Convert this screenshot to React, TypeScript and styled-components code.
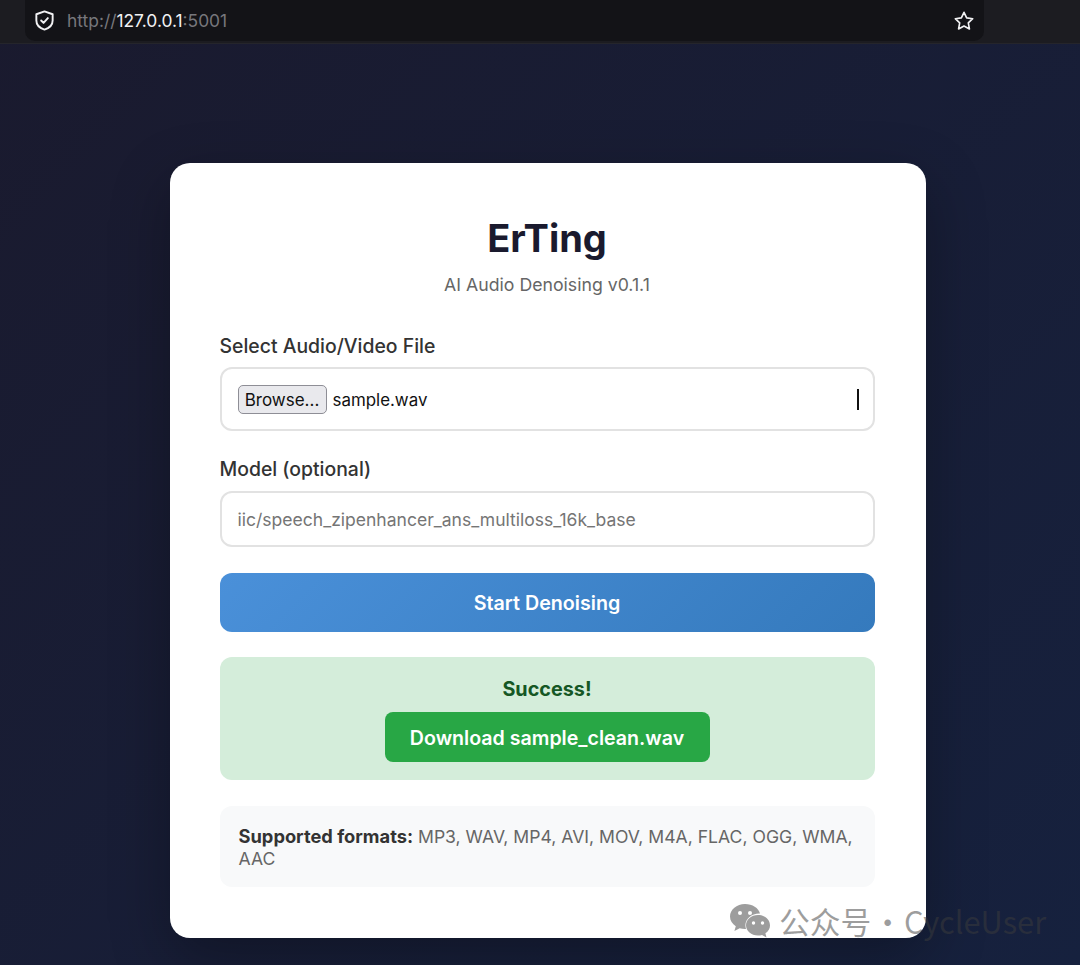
import React from "react";
import styled, { createGlobalStyle } from "styled-components";

const Global = createGlobalStyle`
  html, body { margin: 0; padding: 0; height: 100%; }
  body { font-family: Inter, "Liberation Sans", sans-serif; overflow: hidden; }
  * { box-sizing: border-box; }
`;
const Page = styled.div`
  position: relative;
  width: 1080px;
  height: 965px;
  overflow: hidden;
  display: flex;
  flex-direction: column;
  background: linear-gradient(135deg, #1a1a2e 0%, #16213e 100%);
`;
const Chrome = styled.header`
  height: 44px;
  flex: none;
  background: #1c1c21;
  border-bottom: 1px solid #25252b;
  padding: 0 96px 0 25px;
`;
const UrlBar = styled.div`
  height: 41px;
  background: #131317;
  border-radius: 0 0 10px 10px;
  display: flex;
  align-items: center;
  padding: 0 9px 0 8px;
`;
const Url = styled.span`
  margin-left: 11px;
  font-size: 17.4px;
  color: #77777c;
  flex: 1;
`;
const Host = styled.span`
  color: #f2f2f4;
`;
const Stage = styled.main`
  flex: 1;
  display: flex;
  justify-content: center;
  padding: 119px 0 0 15px;
`;
const Card = styled.section`
  width: 756px;
  height: 775px;
  background: #fff;
  border-radius: 20px;
  padding: 51px 51px 50px 50px;
  box-shadow: 0 20px 60px rgba(0, 0, 0, 0.3);
`;
const Title = styled.h1`
  margin: 0;
  text-align: center;
  font-size: 38px;
  line-height: 48px;
  font-weight: 700;
  color: #1a1a2e;
`;
const Sub = styled.p`
  margin: 12px 0 0;
  text-align: center;
  font-size: 17.7px;
  line-height: 22px;
  color: #666;
`;
const Field = styled.div<{ $top: number }>`
  margin-top: ${(p) => p.$top}px;
`;
const Label = styled.label`
  display: block;
  font-size: 19.4px;
  line-height: 24px;
  font-weight: 500;
  color: #333;
  margin-bottom: 9px;
`;
const FileBox = styled.div`
  height: 64px;
  border: 2px solid #e2e2e2;
  border-radius: 12px;
  display: flex;
  align-items: center;
  padding: 0 14px 0 16px;
  background: #fff;
`;
const Browse = styled.button`
  width: 89px;
  height: 29px;
  padding: 1px 0 0;
  border: 1px solid #8e8e96;
  border-radius: 5px;
  background: #e9e9ed;
  color: #111;
  font: 400 17px Inter, sans-serif;
`;
const FileName = styled.span`
  margin-left: 6px;
  padding-top: 2px;
  font-size: 16.9px;
  color: #111;
  flex: 1;
`;
const Caret = styled.span`
  width: 2px;
  height: 21px;
  background: #111;
`;
const TextBox = styled.div`
  height: 56px;
  margin-top: 10px;
  border: 2px solid #e2e2e2;
  border-radius: 12px;
  display: flex;
  align-items: center;
  padding: 0 16px;
  font-size: 17.55px;
  color: #757575;
`;
const Primary = styled.button`
  display: block;
  width: 100%;
  height: 59px;
  margin-top: 26px;
  border: 0;
  border-radius: 12px;
  background: linear-gradient(135deg, #4a90d9 0%, #357abd 100%);
  color: #fff;
  font: 600 19.7px Inter, sans-serif;
`;
const Result = styled.div`
  margin-top: 25px;
  height: 123px;
  background: #d4edda;
  border-radius: 12px;
  padding-top: 20px;
  display: flex;
  flex-direction: column;
  align-items: center;
`;
const Ok = styled.strong`
  font-size: 19.8px;
  line-height: 24px;
  font-weight: 700;
  color: #155724;
`;
const Download = styled.a`
  margin-top: 11px;
  width: 325px;
  height: 50px;
  padding-top: 1px;
  background: #28a745;
  border-radius: 8px;
  color: #fff;
  font-size: 19.6px;
  font-weight: 600;
  display: flex;
  align-items: center;
  justify-content: center;
`;
const Formats = styled.div`
  margin-top: 26px;
  height: 81px;
  background: #f8f9fa;
  border-radius: 12px;
  padding: 19px 19px 0;
  font-size: 17.6px;
  line-height: 22px;
  color: #666;
  strong { color: #333; font-weight: 700; font-size: 18.3px; }
`;
const Mark = styled.div`
  position: absolute;
  left: 729px;
  top: 900px;
  display: flex;
  align-items: center;
  color: rgba(60, 60, 60, 0.5);
  font: 400 30.8px "Noto Sans CJK SC", "Noto Sans", sans-serif;
  line-height: 42px;
  word-spacing: -6px;
  white-space: nowrap;
`;
const MarkText = styled.span`
  margin-left: 8px;
`;

export default function App() {
  return (
    <Page>
      <Global />
      <Chrome>
        <UrlBar>
          <svg width="23" height="23" viewBox="0 0 24 24" fill="none" stroke="#f2f2f4" strokeWidth="2" strokeLinecap="round" strokeLinejoin="round">
            <path d="M12 2.500 20.500 5.500v6.500c0 4.800-3.600 8-8.500 9.500-4.900-1.500-8.500-4.700-8.500-9.500V5.500z" />
            <path d="m8.500 12 2.500 2.500 4.500-5" />
          </svg>
          <Url>
            http://<Host>127.0.0.1</Host>:5001
          </Url>
          <svg width="22" height="22" viewBox="0 0 24 24" fill="none" stroke="#f2f2f4" strokeWidth="1.800" strokeLinejoin="round">
            <path d="m12 2.500 2.900 6.100 6.600.9-4.800 4.600 1.200 6.600-5.900-3.200-5.900 3.200 1.200-6.600-4.800-4.600 6.600-.9z" />
          </svg>
        </UrlBar>
      </Chrome>
      <Stage>
        <Card>
          <Title>ErTing</Title>
          <Sub>AI Audio Denoising v0.1.1</Sub>
          <Field $top={38}>
            <Label>Select Audio/Video File</Label>
            <FileBox>
              <Browse>Browse...</Browse>
              <FileName>sample.wav</FileName>
              <Caret />
            </FileBox>
          </Field>
          <Field $top={26}>
            <Label>Model (optional)</Label>
            <TextBox>iic/speech_zipenhancer_ans_multiloss_16k_base</TextBox>
          </Field>
          <Primary>Start Denoising</Primary>
          <Result>
            <Ok>Success!</Ok>
            <Download>Download sample_clean.wav</Download>
          </Result>
          <Formats>
            <strong>Supported formats:</strong> MP3, WAV, MP4, AVI, MOV, M4A, FLAC, OGG, WMA, AAC
          </Formats>
        </Card>
      </Stage>
      <Mark>
        <svg width="42" height="36" viewBox="0 0 42 36" fill="currentColor">
          <path d="M16 1C7.700 1 1 6.700 1 13.500c0 4 2.300 7.500 5.800 9.800L5.400 28l5.300-2.800c1.600.4 3.400.7 5.300.7l1 0c-.4-1.200-.6-2.400-.6-3.600 0-6.700 6.200-11.900 13.800-11.900l.8 0C29.600 5 23.400 1 16 1z" />
          <path d="M29 12c-6.600 0-12 4.600-12 10.200S22.400 32.500 29 32.500c1.400 0 2.700-.2 4-.6l4.500 2.600-1.100-4.200c3-1.900 4.600-4.900 4.600-7.900C41 16.600 35.600 12 29 12z" />
          <circle cx="11" cy="10" r="2" fill="#fff" />
          <circle cx="21" cy="10" r="2" fill="#fff" />
          <circle cx="24.500" cy="20" r="1.700" fill="#fff" />
          <circle cx="33.500" cy="20" r="1.700" fill="#fff" />
        </svg>
        <MarkText>公众号 · CycleUser</MarkText>
      </Mark>
    </Page>
  );
}
